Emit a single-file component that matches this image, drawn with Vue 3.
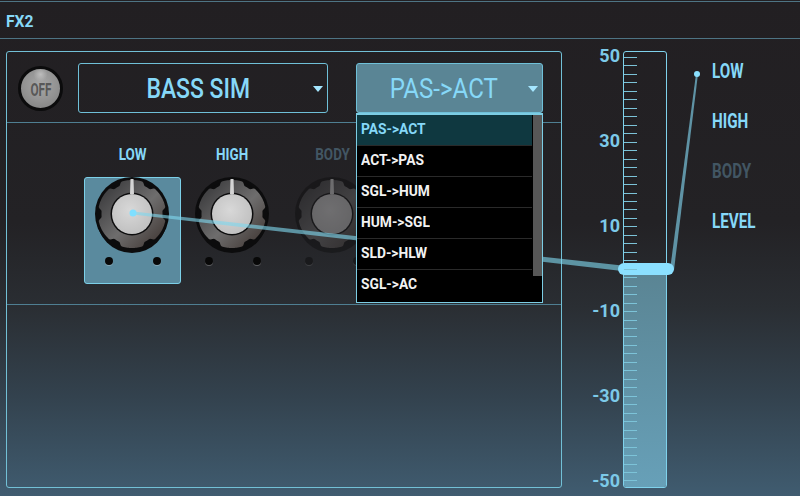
<template>
  <div class="screen">
    <header class="title-bar"><span class="cond fx-name">FX2</span></header>

    <main class="content">
      <section class="panel">
        <div class="top-row">
          <button class="off-btn"><span class="cond">OFF</span></button>
          <div class="select type-select">
            <span class="cond">BASS SIM</span>
            <i class="caret"></i>
          </div>
          <div class="select mode-select">
            <span class="cond">PAS-&gt;ACT</span>
            <i class="caret"></i>
          </div>
        </div>

        <div class="knob-row">
          <div
            v-for="knob in knobs"
            :key="knob.name"
            class="knob-col"
            :class="{ disabled: knob.disabled }"
          >
            <div class="knob-label"><span class="cond">{{ knob.name }}</span></div>
            <div class="knob-cell" :class="{ active: knob.active }">
              <svg class="knob" width="78" height="78" viewBox="0 0 78 78">
                <defs>
                  <linearGradient :id="'gear' + knob.name" x1="0.1" y1="0.1" x2="0.9" y2="0.9">
                    <stop offset="0" stop-color="#3c3c3e" />
                    <stop offset="0.55" stop-color="#6e6d6d" />
                    <stop offset="1" stop-color="#463e3b" />
                  </linearGradient>
                  <radialGradient :id="'cap' + knob.name" cx="0.45" cy="0.4" r="0.7">
                    <stop offset="0" stop-color="#d8d8d8" />
                    <stop offset="1" stop-color="#bdbdbd" />
                  </radialGradient>
                </defs>
                <circle cx="39" cy="39" r="37" fill="#0c0c0d" />
                <ellipse cx="39" cy="42" rx="35.5" ry="36" fill="#0c0c0d" />
                <path :d="gearPath" :fill="'url(#gear' + knob.name + ')'" />
                <circle cx="39" cy="39" r="21.5" fill="#0d0d0e" />
                <circle cx="39" cy="39" r="20" :fill="'url(#cap' + knob.name + ')'" />
                <polygon points="37.5,4 40.5,4 41,19 37,19" fill="#d4d4d4" />
              </svg>
              <div class="knob-dots"><i></i><i></i></div>
            </div>
          </div>
        </div>

        <div class="panel-rest"></div>
      </section>

      <div class="scale">
        <span v-for="n in scaleLabels" :key="n" class="scale-num">{{ n }}</span>
      </div>

      <div class="fader">
        <div class="ticks"><i v-for="n in 51" :key="n"></i></div>
        <div class="fader-fill"></div>
      </div>

      <div class="assign-list">
        <div
          v-for="item in assigns"
          :key="item.name"
          class="assign"
          :class="{ disabled: item.disabled }"
        >
          <span class="cond">{{ item.name }}</span>
        </div>
      </div>
    </main>

    <!-- connection from the selected knob through the fader to the list -->
    <svg class="wires" width="800" height="496" viewBox="0 0 800 496">
      <polygon points="133,211.5 133,214.5 622,271 622,265.5" fill="#7fd6ee" fill-opacity="0.62" />
      <polygon points="670,270 674,270 698,74 696,74" fill="#5f93a5" />
      <circle cx="697" cy="74" r="3" fill="#8be0ff" />
      <circle cx="133" cy="213" r="3.5" fill="#7fdfff" />
    </svg>

    <div class="fader-handle"></div>

    <div class="menu">
      <ul>
        <li
          v-for="(opt, i) in options"
          :key="opt"
          :class="{ selected: i === 0 }"
        >
          <span class="cond">{{ opt }}</span>
        </li>
      </ul>
      <div class="menu-scroll"></div>
    </div>
  </div>
</template>

<script setup>
const knobs = [
  { name: "LOW", active: true },
  { name: "HIGH" },
  { name: "BODY", disabled: true },
];

const assigns = [
  { name: "LOW" },
  { name: "HIGH" },
  { name: "BODY", disabled: true },
  { name: "LEVEL" },
];

const options = [
  "PAS->ACT",
  "ACT->PAS",
  "SGL->HUM",
  "HUM->SGL",
  "SLD->HLW",
  "SGL->AC",
];

const scaleLabels = ["50", "30", "10", "-10", "-30", "-50"];

// skirt of the knob, six soft notches cut into it
const makeGear = () => {
  let d = "";
  const steps = 180;
  for (let i = 0; i < steps; i++) {
    const a = (i / steps) * Math.PI * 2;
    const wave = Math.cos(6 * a);
    const dip = wave > 0.4 ? (wave - 0.4) / 0.6 : 0;
    const r = 34 - Math.min(dip * 1.4, 1) * 3.5;
    const x = 39 + r * Math.cos(a);
    const y = 39 + r * Math.sin(a);
    d += (i === 0 ? "M" : "L") + x.toFixed(2) + " " + y.toFixed(2);
  }
  return d + "Z";
};

const gearPath = makeGear();
</script>

<style>
html,
body {
  margin: 0;
  background: #232125;
}
</style>

<style scoped>
.screen {
  position: relative;
  width: 800px;
  height: 496px;
  overflow: hidden;
  display: flex;
  flex-direction: column;
  font-family: Roboto, "Liberation Sans", sans-serif;
  color: #86d8f8;
  background: linear-gradient(
    180deg,
    #221f22 0,
    #232225 45%,
    #2a2e33 62%,
    #33424e 80%,
    #405c70 100%
  );
}

.cond {
  display: inline-block;
  transform: scaleX(0.84);
  white-space: nowrap;
}

.title-bar {
  height: 36px;
  margin-top: 1px;
  border-top: 1px solid #4e7484;
  border-bottom: 1px solid #4e7484;
  display: flex;
  align-items: center;
  padding-left: 6px;
}

.title-bar .fx-name {
  font-size: 17px;
  font-weight: 700;
  transform: scaleX(0.92);
  transform-origin: left center;
  margin-top: 1px;
}

.content {
  flex: 1;
  display: flex;
  padding: 12px 0 8px 6px;
  min-height: 0;
}

.panel {
  width: 556px;
  box-sizing: border-box;
  border: 1px solid #72c0d6;
  border-radius: 3px;
  display: flex;
  flex-direction: column;
}

.top-row {
  height: 71px;
  flex: none;
  box-sizing: border-box;
  border-bottom: 1px solid #4f7f92;
  display: flex;
  padding: 11px 0 0 11px;
}

.off-btn {
  width: 45px;
  height: 45px;
  margin-top: 3px;
  padding: 0;
  border: 3px solid #0b0b0c;
  border-radius: 50%;
  background:
    radial-gradient(circle at 50% 14%, #bdbdbd 0, rgba(189, 189, 189, 0) 18%),
    radial-gradient(circle at 50% 40%, #a8a8a8 0, #929292 55%, #7c7c7c 100%);
  color: #585858;
  font-family: inherit;
  font-size: 19px;
  font-weight: 700;
  display: flex;
  align-items: center;
  justify-content: center;
  box-sizing: border-box;
}

.off-btn .cond {
  transform: scaleX(0.62);
  margin-top: 2px;
}

.select {
  position: relative;
  height: 50px;
  box-sizing: border-box;
  border: 1px solid #6fc0d8;
  border-radius: 3px;
  display: flex;
  align-items: center;
  justify-content: center;
  font-size: 28px;
}

.type-select {
  width: 250px;
  margin-left: 15px;
  padding-right: 10px;
  font-weight: 500;
}

.type-select .cond {
  transform: scaleX(0.82);
}

.mode-select {
  width: 187px;
  margin-left: 28px;
  padding-right: 12px;
  background: #5a8595;
}

.mode-select .cond {
  transform: scaleX(0.86);
}

.caret {
  position: absolute;
  right: 4px;
  top: 22px;
  border-left: 5.5px solid transparent;
  border-right: 5.5px solid transparent;
  border-top: 6px solid #a5e6ff;
}

.knob-row {
  height: 182px;
  flex: none;
  box-sizing: border-box;
  border-bottom: 1px solid #4f7f92;
  display: flex;
  padding: 22px 0 0 77px;
  gap: 3px;
}

.knob-col {
  width: 97px;
  display: flex;
  flex-direction: column;
  align-items: center;
}

.knob-label {
  height: 32px;
  font-size: 16px;
  font-weight: 700;
  line-height: 20px;
}

.knob-label .cond {
  transform: scaleX(0.84);
}

.knob-cell {
  width: 97px;
  height: 107px;
  box-sizing: border-box;
  border: 1px solid transparent;
  border-radius: 3px;
  display: flex;
  flex-direction: column;
  align-items: center;
}

.knob-cell.active {
  background: #5a8a9e;
  border-color: #7cd0e8;
}

.knob {
  display: block;
  margin-top: -3px;
  margin-left: -2px;
}

.knob-dots {
  width: 56px;
  display: flex;
  justify-content: space-between;
  margin-top: 4px;
}

.knob-dots i {
  width: 8px;
  height: 8px;
  border-radius: 50%;
  background: #080808;
  box-shadow: 0 1px 0 rgba(255, 255, 255, 0.25);
}

.knob-col.disabled .knob-label {
  color: #425663;
}

.knob-col.disabled .knob-cell {
  opacity: 0.42;
}

.panel-rest {
  flex: 1;
}

.scale {
  width: 58px;
  display: flex;
  flex-direction: column;
  justify-content: space-between;
  align-items: flex-end;
  font-size: 18px;
  font-weight: 700;
  line-height: 20px;
  margin-top: -5px;
  margin-bottom: -3px;
  color: #7cc9e8;
}

.fader {
  position: relative;
  width: 44px;
  margin-left: 3px;
  box-sizing: border-box;
  border: 1px solid #7fd2ec;
  border-radius: 3px;
  overflow: hidden;
}

.ticks {
  position: absolute;
  left: 0;
  top: 5px;
  bottom: 5px;
  width: 13px;
  display: flex;
  flex-direction: column;
  justify-content: space-between;
  z-index: 1;
}

.ticks i {
  display: block;
  height: 1px;
  background: #7cc3d8;
}

.fader-fill {
  position: absolute;
  left: 0;
  right: 0;
  bottom: 0;
  height: 218px;
  background: linear-gradient(180deg, #5a8493 0, #67a0b8 100%);
}

.assign-list {
  margin-left: 45px;
  padding-top: 10px;
  font-size: 20px;
  font-weight: 700;
}

.assign {
  height: 50px;
  line-height: 20px;
  width: 60px;
}

.assign .cond {
  transform: scaleX(0.76);
  transform-origin: left center;
}

.assign.disabled {
  color: #425663;
}

.wires {
  position: absolute;
  left: 0;
  top: 0;
  pointer-events: none;
}

.fader-handle {
  position: absolute;
  left: 618px;
  top: 263px;
  width: 56px;
  height: 12px;
  border-radius: 6px;
  background: #8be0ff;
}

.menu {
  position: absolute;
  left: 356px;
  top: 113px;
  width: 187px;
  height: 190px;
  box-sizing: border-box;
  background: #000;
  border: 1px solid #7ccde4;
  border-top-width: 2px;
  color: #f2f2f2;
}

.menu ul {
  margin: 0;
  padding: 0;
  list-style: none;
}

.menu li {
  height: 31px;
  width: 175px;
  box-sizing: border-box;
  border-bottom: 1px solid #2a2a2a;
  padding-left: 4px;
  font-size: 15px;
  font-weight: 700;
  line-height: 29px;
}

.menu li:last-child {
  border-bottom: none;
}

.menu li .cond {
  transform: scaleX(0.92);
  transform-origin: left center;
}

.menu li.selected {
  background: #0f3840;
  color: #86d8f8;
}

.menu-scroll {
  position: absolute;
  right: 0;
  top: 0;
  width: 9px;
  height: 161px;
  background: #575757;
}
</style>
